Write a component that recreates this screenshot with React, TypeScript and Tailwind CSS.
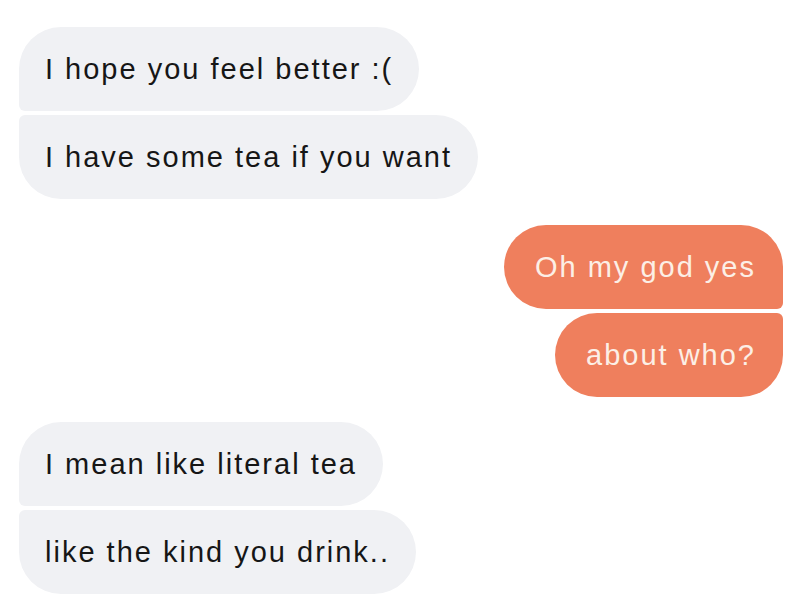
import React from "react";

const font = { fontFamily: '"Liberation Sans", Arial, sans-serif' };

function Gray({ text, pos }: { text: string; pos: "top" | "bottom" }) {
  return (
    <div
      className={
        "self-start h-[84px] flex items-center pl-[26px] pr-[26px] bg-[#f0f1f4] text-[#161616] text-[29px] leading-[34px] tracking-[2px] rounded-[42px] " +
        (pos === "top" ? "rounded-bl-[6px]" : "rounded-tl-[6px]")
      }
    >
      {text}
    </div>
  );
}

function Orange({ text, pos }: { text: string; pos: "top" | "bottom" }) {
  return (
    <div
      className={
        "self-end h-[84px] flex items-center pl-[31px] pr-[27px] bg-[#ef7f5d] text-[#fcefe6] text-[29px] leading-[34px] tracking-[2px] rounded-[42px] " +
        (pos === "top" ? "rounded-br-[6px]" : "rounded-tr-[6px]")
      }
    >
      {text}
    </div>
  );
}

export default function App() {
  return (
    <div
      className="w-[800px] h-[594px] bg-white overflow-hidden pt-[27px] pl-[19px] pr-[17px] flex flex-col gap-[26px]"
      style={font}
    >
      <div className="flex flex-col gap-[4px]">
        <Gray text="I hope you feel better :(" pos="top" />
        <Gray text="I have some tea if you want" pos="bottom" />
      </div>
      <div className="flex flex-col gap-[4px]">
        <Orange text="Oh my god yes" pos="top" />
        <Orange text="about who?" pos="bottom" />
      </div>
      <div className="flex flex-col gap-[4px] -mt-[1px]">
        <Gray text="I mean like literal tea" pos="top" />
        <Gray text="like the kind you drink.." pos="bottom" />
      </div>
    </div>
  );
}
